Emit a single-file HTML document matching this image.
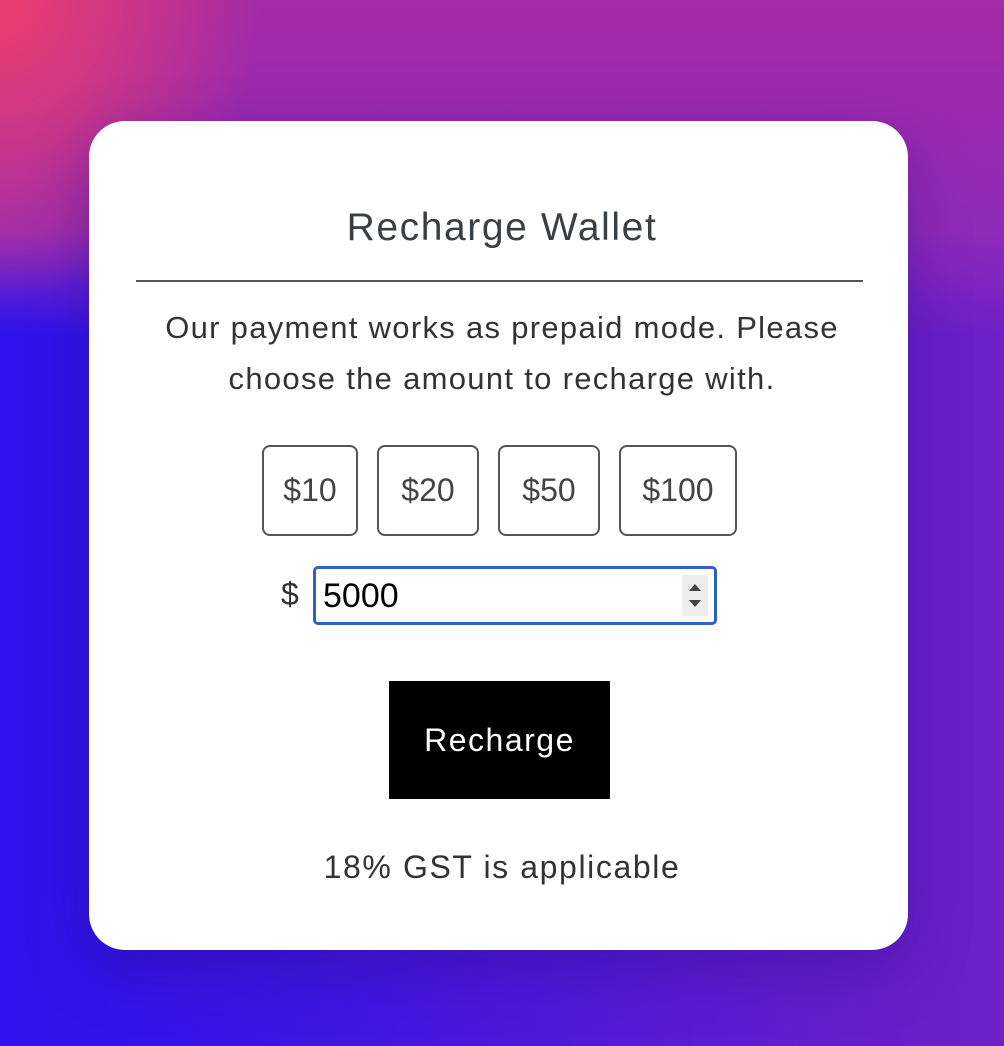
<!DOCTYPE html>
<html><head><meta charset="utf-8"><style>
html,body{margin:0;padding:0;width:1004px;height:1046px;overflow:hidden;font-family:"Liberation Sans",sans-serif}
body{background:
radial-gradient(ellipse 260px 300px at 0% 0%, rgba(236,62,110,1) 0%, rgba(236,62,110,0.6) 45%, rgba(236,62,110,0) 100%),
linear-gradient(to bottom, #a42aa6 0%, #8f2ab8 22%, transparent 32%),
linear-gradient(to right, #2c12ec 0%, #4416e0 40%, #5e1ccf 75%, #6e20c6 100%);}
.card{position:absolute;left:89px;top:121px;width:819px;height:829px;background:#fff;border-radius:36px;box-shadow:0 20px 60px rgba(40,10,120,.35)}
.title{position:absolute;left:0;right:0;top:206px;text-align:center;font-size:39px;letter-spacing:1.6px;color:#3a3f44}
.hr{position:absolute;left:136px;top:280px;width:727px;height:2px;background:#555}
.p{position:absolute;left:0;right:0;top:302px;text-align:center;font-size:31px;letter-spacing:1.3px;line-height:51px;color:#333}
.b{position:absolute;top:445px;height:87px;border:2px solid #555;border-radius:8px;font-size:32px;color:#444;display:flex;align-items:center;justify-content:center;box-sizing:content-box}
.dol{position:absolute;left:281px;top:576px;font-size:32px;color:#333}
.inp{position:absolute;left:313px;top:566px;width:398px;height:53px;border:3px solid #2a62c9;border-radius:5px}
.inp span{position:absolute;left:7px;top:8px;font-size:34px;color:#000}
.spin{position:absolute;right:6px;top:6px;width:26px;height:41px;background:#eee}
.rc{position:absolute;left:389px;top:681px;width:221px;height:118px;background:#000;color:#fff;font-size:32px;letter-spacing:1.5px;display:flex;align-items:center;justify-content:center}
.gst{position:absolute;left:0;right:0;top:849px;text-align:center;font-size:32px;letter-spacing:1.6px;color:#333}
</style></head><body>
<div class="card"></div>
<div class="title">Recharge Wallet</div>
<div class="hr"></div>
<div class="p">Our payment works as prepaid mode. Please<br>choose the amount to recharge with.</div>
<div class="b" style="left:262px;width:92px">$10</div>
<div class="b" style="left:377px;width:98px">$20</div>
<div class="b" style="left:498px;width:98px">$50</div>
<div class="b" style="left:619px;width:114px">$100</div>
<div class="dol">$</div>
<div class="inp"><span>5000</span><div class="spin"><svg width="26" height="41"><path d="M7 16 L13 9 L19 16Z M7 25 L13 32 L19 25Z" fill="#444"/></svg></div></div>
<div class="rc">Recharge</div>
<div class="gst">18% GST is applicable</div>
</body></html>
